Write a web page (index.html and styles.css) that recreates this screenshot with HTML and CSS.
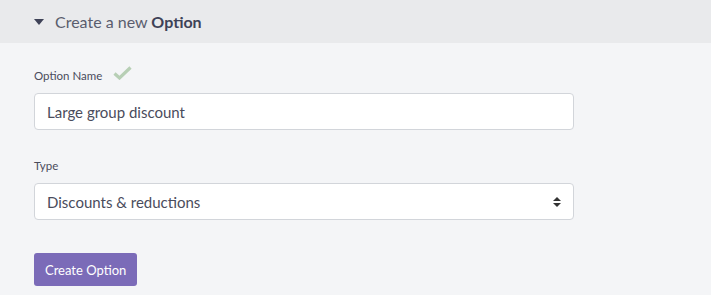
FILE: index.html
```html
<!DOCTYPE html>
<html lang="en">
<head>
  <meta charset="UTF-8" />
  <title>Create Option</title>
  <link rel="stylesheet" href="styles.css">
</head>
<body>

<div class="panel">
  <div class="panel-header">
    <span class="caret"></span>
    <h2>Create a new <strong>Option</strong></h2>
  </div>

  <!-- Option form -->
  <form class="panel-body">
    <div class="field">
      <label for="name">Option Name
        <svg class="check" width="19" height="14" viewBox="0 0 19 14">
          <path d="M1.5 7.5 L6.5 12 L17.5 1.5" fill="none" stroke="#b7cfb5" stroke-width="3.2"/>
        </svg>
      </label>
      <input type="text" id="name" value="Large group discount">
    </div>
    <div class="field">
      <label for="type">Type</label>
      <div class="select-wrap">
        <select id="type">
          <option>Discounts &amp; reductions</option>
        </select>
        <svg class="arrows" width="8" height="12" viewBox="0 0 8 12">
          <path d="M0 5 L4 1 L8 5 Z M0 7 L4 11 L8 7 Z" fill="#333"/>
        </svg>
      </div>
    </div>
    <button type="button">Create Option</button>
  </form>
</div>

</body>
</html>
```

FILE: styles.css
```css
body {
  font-family: Lato, 'Open Sans', sans-serif;
  background: #f4f5f7;
  margin: 0;
  padding: 0;
  color: #4a4c5c;
}

.panel-header {
  display: flex;
  align-items: center;
  height: 43px;
  background: #e9eaec;
  padding-left: 34px;
}

.caret {
  width: 0;
  height: 0;
  border-left: 5px solid transparent;
  border-right: 5px solid transparent;
  border-top: 6px solid #3e4257;
  margin-right: 11px;
  margin-top: 1px;
}

.panel-header h2 {
  margin: 0;
  font-size: 16px;
  font-weight: 400;
  color: #5a5d6e;
}

.panel-header strong {
  font-weight: 700;
  color: #3e4257;
}

.panel-body {
  padding: 22px 137px 0 34px;
}

.field {
  margin-bottom: 25px;
}

.field + .field {
  margin-bottom: 33px;
}

label {
  display: flex;
  align-items: center;
  font-size: 11.5px;
  height: 20px;
  margin-bottom: 8px;
  color: #4a4c5c;
}

.check {
  margin-left: 11px;
  margin-top: -5px;
}

input, select {
  width: 100%;
  height: 37px;
  padding: 0 12px;
  border: 1px solid #d2d5da;
  border-radius: 4px;
  background: #fff;
  font-family: inherit;
  font-size: 15px;
  color: #4a4c5c;
  box-sizing: border-box;
  outline: none;
}

.select-wrap {
  position: relative;
}

select {
  appearance: none;
  -webkit-appearance: none;
}

.arrows {
  position: absolute;
  right: 13px;
  top: 13px;
  pointer-events: none;
}

button {
  background-color: #7b6bb8;
  color: #fff;
  border: none;
  border-radius: 3px;
  height: 33px;
  padding: 0 11px;
  font-family: inherit;
  font-size: 13px;
  cursor: pointer;
}
```
